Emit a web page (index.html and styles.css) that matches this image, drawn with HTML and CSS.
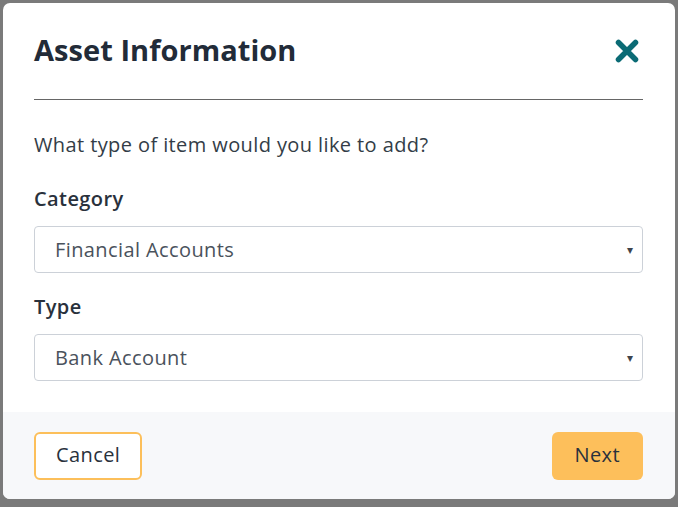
FILE: index.html
```html
<!DOCTYPE html>
<html lang="en">
<head>
  <meta charset="UTF-8">
  <title>Asset Information</title>
  <meta name="viewport" content="width=device-width, initial-scale=1">
  <link rel="stylesheet" href="styles.css">
</head>
<body>
  <!-- Modal overlay -->
  <div class="overlay">
    <div class="modal">
      <div class="modal-header">
        <h2 class="modal-title">Asset Information</h2>
        <button class="close-btn" aria-label="Close">
          <svg width="24" height="24" viewBox="0 0 24 24">
            <path d="M3.5 3.5 L20.5 20.5 M20.5 3.5 L3.5 20.5" stroke="#0b6b75" stroke-width="5.5" stroke-linecap="round"/>
          </svg>
        </button>
      </div>

      <div class="modal-body">
        <p class="question">What type of item would you like to add?</p>

        <label class="field-label">Category</label>
        <div class="select">
          <span>Financial Accounts</span>
          <span class="caret">&#9662;</span>
        </div>

        <label class="field-label">Type</label>
        <div class="select">
          <span>Bank Account</span>
          <span class="caret">&#9662;</span>
        </div>
      </div>

      <div class="modal-footer">
        <button class="btn btn-outline">Cancel</button>
        <button class="btn btn-primary">Next</button>
      </div>
    </div>
  </div>
</body>
</html>
```

FILE: styles.css
```css
/* Global */
body {
  margin: 0;
  padding: 0;
  font-family: "Open Sans", Lato, sans-serif;
  font-size: 20px;
  line-height: 24px;
  letter-spacing: 0.4px;
  background-color: #7a7a7a;
  color: #29313c;
}
.overlay {
  padding: 3px 3px 8px 3px;
}
.modal {
  background-color: #fff;
  border-radius: 7px;
  overflow: hidden;
  width: 672px;
}
/* Header */
.modal-header {
  box-sizing: border-box;
  display: flex;
  justify-content: space-between;
  align-items: center;
  margin: 0 32px 0 31px;
  height: 97px;
  padding-bottom: 2px;
  border-bottom: 1px solid #666;
}
.modal-title {
  margin: 0;
  font-size: 29px;
  line-height: 36px;
  letter-spacing: 0.05px;
  font-weight: bold;
  color: #222b38;
}
.close-btn {
  background: none;
  border: none;
  padding: 0;
  margin-right: 4px;
  margin-top: 2px;
  cursor: pointer;
  display: flex;
}
/* Body */
.modal-body {
  padding: 33px 32px 31px 31px;
}
.question {
  margin: 0 0 30px;
  color: #333d47;
}
.field-label {
  display: block;
  font-weight: 600;
  margin-bottom: 15px;
}
.select {
  box-sizing: border-box;
  display: flex;
  justify-content: space-between;
  align-items: center;
  height: 47px;
  border: 1px solid #ccd1d8;
  border-radius: 4px;
  padding: 0 9px 0 20px;
  color: #4a525c;
  margin-bottom: 22px;
}
.select:last-child {
  margin-bottom: 0;
}
.caret {
  font-size: 12px;
  color: #3e444c;
}
/* Footer */
.modal-footer {
  display: flex;
  justify-content: space-between;
  background-color: #f7f8fa;
  padding: 20px 32px 19px 31px;
}
.btn {
  font-family: inherit;
  font-size: 20px;
  letter-spacing: 0.4px;
  height: 48px;
  border-radius: 6px;
  padding: 0 20px 3px;
  color: #29313c;
  cursor: pointer;
}
.btn-outline {
  background-color: #fff;
  border: 2px solid #fcbf5a;
}
.btn-primary {
  background-color: #fdbf5b;
  border: none;
  padding: 0 23px 3px;
}
```
